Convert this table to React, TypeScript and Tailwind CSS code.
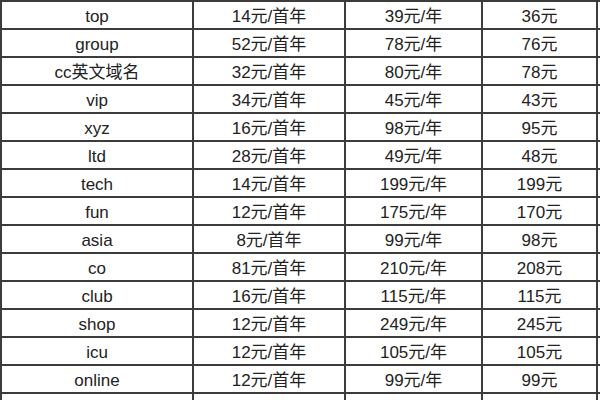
import React from "react";

const rows: [string, string, string, string][] = [
  ["top", "14元/首年", "39元/年", "36元"],
  ["group", "52元/首年", "78元/年", "76元"],
  ["cc英文域名", "32元/首年", "80元/年", "78元"],
  ["vip", "34元/首年", "45元/年", "43元"],
  ["xyz", "16元/首年", "98元/年", "95元"],
  ["ltd", "28元/首年", "49元/年", "48元"],
  ["tech", "14元/首年", "199元/年", "199元"],
  ["fun", "12元/首年", "175元/年", "170元"],
  ["asia", "8元/首年", "99元/年", "98元"],
  ["co", "81元/首年", "210元/年", "208元"],
  ["club", "16元/首年", "115元/年", "115元"],
  ["shop", "12元/首年", "249元/年", "245元"],
  ["icu", "12元/首年", "105元/年", "105元"],
  ["online", "12元/首年", "99元/年", "99元"],
  ["", "", "", ""],
];

export default function App() {
  return (
    <div
      className="w-[600px] h-[400px] overflow-hidden bg-white text-[#222] text-[17px]"
      style={{ fontFamily: '"Liberation Sans", Arial, "Noto Sans CJK SC", sans-serif' }}
    >
      <div className="border-t-2 border-[#3c3c3c]">
        {rows.map((r, i) => (
          <div
            key={i}
            className="grid grid-cols-[192px_152px_137px_117px] h-[28px] border-b-2 border-[#3c3c3c]"
          >
            {r.map((c, j) => (
              <div
                key={j}
                className={
                  "flex items-center justify-center border-l-2 border-[#3c3c3c] pt-[2px] leading-none" +
                  (j === 3 ? " border-r-2" : "")
                }
              >
                {c}
              </div>
            ))}
          </div>
        ))}
      </div>
    </div>
  );
}
